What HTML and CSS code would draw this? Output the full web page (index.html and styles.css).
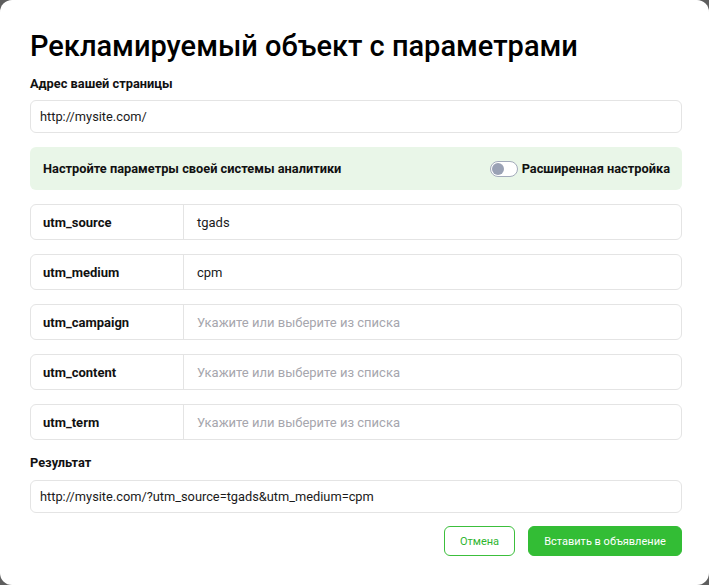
FILE: index.html
```html
<!DOCTYPE html>
<html lang="ru">
<head>
<meta charset="utf-8">
<link rel="stylesheet" href="styles.css">
</head>
<body>
<div class="dialog">
  <h1 class="title">Рекламируемый объект с параметрами</h1>
  <div class="label">Адрес вашей страницы</div>
  <div class="input">http://mysite.com/</div>
  <div class="panel">
    <div class="panel-text">Настройте параметры своей системы аналитики</div>
    <div class="switch-wrap">
      <span class="switch"><span class="knob"></span></span>
      <span class="switch-label">Расширенная настройка</span>
    </div>
  </div>
  <div class="rows">
    <div class="row"><div class="key">utm_source</div><div class="val">tgads</div></div>
    <div class="row"><div class="key">utm_medium</div><div class="val">cpm</div></div>
    <div class="row"><div class="key">utm_campaign</div><div class="val ph">Укажите или выберите из списка</div></div>
    <div class="row"><div class="key">utm_content</div><div class="val ph">Укажите или выберите из списка</div></div>
    <div class="row"><div class="key">utm_term</div><div class="val ph">Укажите или выберите из списка</div></div>
  </div>
  <div class="label result-label">Результат</div>
  <div class="input result">http://mysite.com/?utm_source=tgads&amp;utm_medium=cpm</div>
  <div class="actions">
    <button class="btn btn-outline">Отмена</button>
    <button class="btn btn-primary">Вставить в объявление</button>
  </div>
</div>
</body>
</html>
```
FILE: styles.css
```css
* { box-sizing: border-box; }
html, body { margin: 0; padding: 0; }
body {
  background: #5e5e5e;
  font-family: Roboto, "Liberation Sans", Arial, sans-serif;
  color: #111;
}
.dialog {
  width: 709px;
  height: 585px;
  background: #fff;
  border-radius: 12px;
  padding: 29px 27px 0 30px;
}
.title {
  margin: 0;
  font-size: 29px;
  line-height: 34px;
  font-weight: 500;
  color: #000;
}
.label {
  margin-top: 13px;
  font-size: 12.8px;
  line-height: 16px;
  font-weight: 700;
  color: #111;
}
.input {
  margin-top: 8px;
  height: 33px;
  border: 1px solid #e4e4e4;
  border-radius: 6px;
  padding: 0 9px;
  display: flex;
  align-items: center;
  font-size: 12.8px;
  color: #1a1a1a;
}
.panel {
  margin-top: 14px;
  height: 43px;
  background: #e9f6e8;
  border-radius: 6px;
  padding: 0 12px 0 13px;
  display: flex;
  align-items: center;
  justify-content: space-between;
}
.panel-text, .switch-label {
  font-size: 12.8px;
  font-weight: 700;
  color: #111;
}
.switch-wrap {
  display: flex;
  align-items: center;
  gap: 4px;
}
.switch {
  width: 28px;
  height: 16px;
  border: 1px solid #a3abbb;
  border-radius: 8px;
  background: #fff;
  display: flex;
  align-items: center;
  padding-left: 1px;
}
.knob {
  width: 12px;
  height: 12px;
  border-radius: 50%;
  background: #9aa2b5;
}
.rows {
  margin-top: 14px;
  display: flex;
  flex-direction: column;
  gap: 14px;
}
.row {
  height: 36px;
  border: 1px solid #e4e4e4;
  border-radius: 6px;
  display: flex;
  font-size: 13px;
}
.key {
  width: 153px;
  border-right: 1px solid #e4e4e4;
  padding-left: 12px;
  display: flex;
  align-items: center;
  font-weight: 700;
  color: #111;
}
.val {
  padding-left: 13px;
  display: flex;
  align-items: center;
  color: #1a1a1a;
}
.val.ph { color: #a6a6ad; }
.result-label { margin-top: 15px; }
.result { margin-top: 9px; }
.actions {
  margin-top: 13px;
  display: flex;
  justify-content: flex-end;
  gap: 13px;
}
.btn {
  height: 30px;
  border-radius: 6px;
  font-family: inherit;
  font-size: 11px;
  font-weight: 400;
  cursor: pointer;
}
.btn-outline {
  width: 71px;
  background: #fff;
  border: 1px solid #3cbf3c;
  color: #2fb52f;
}
.btn-primary {
  width: 154px;
  background: #33bd35;
  border: 1px solid #33bd35;
  color: #fff;
}
```
